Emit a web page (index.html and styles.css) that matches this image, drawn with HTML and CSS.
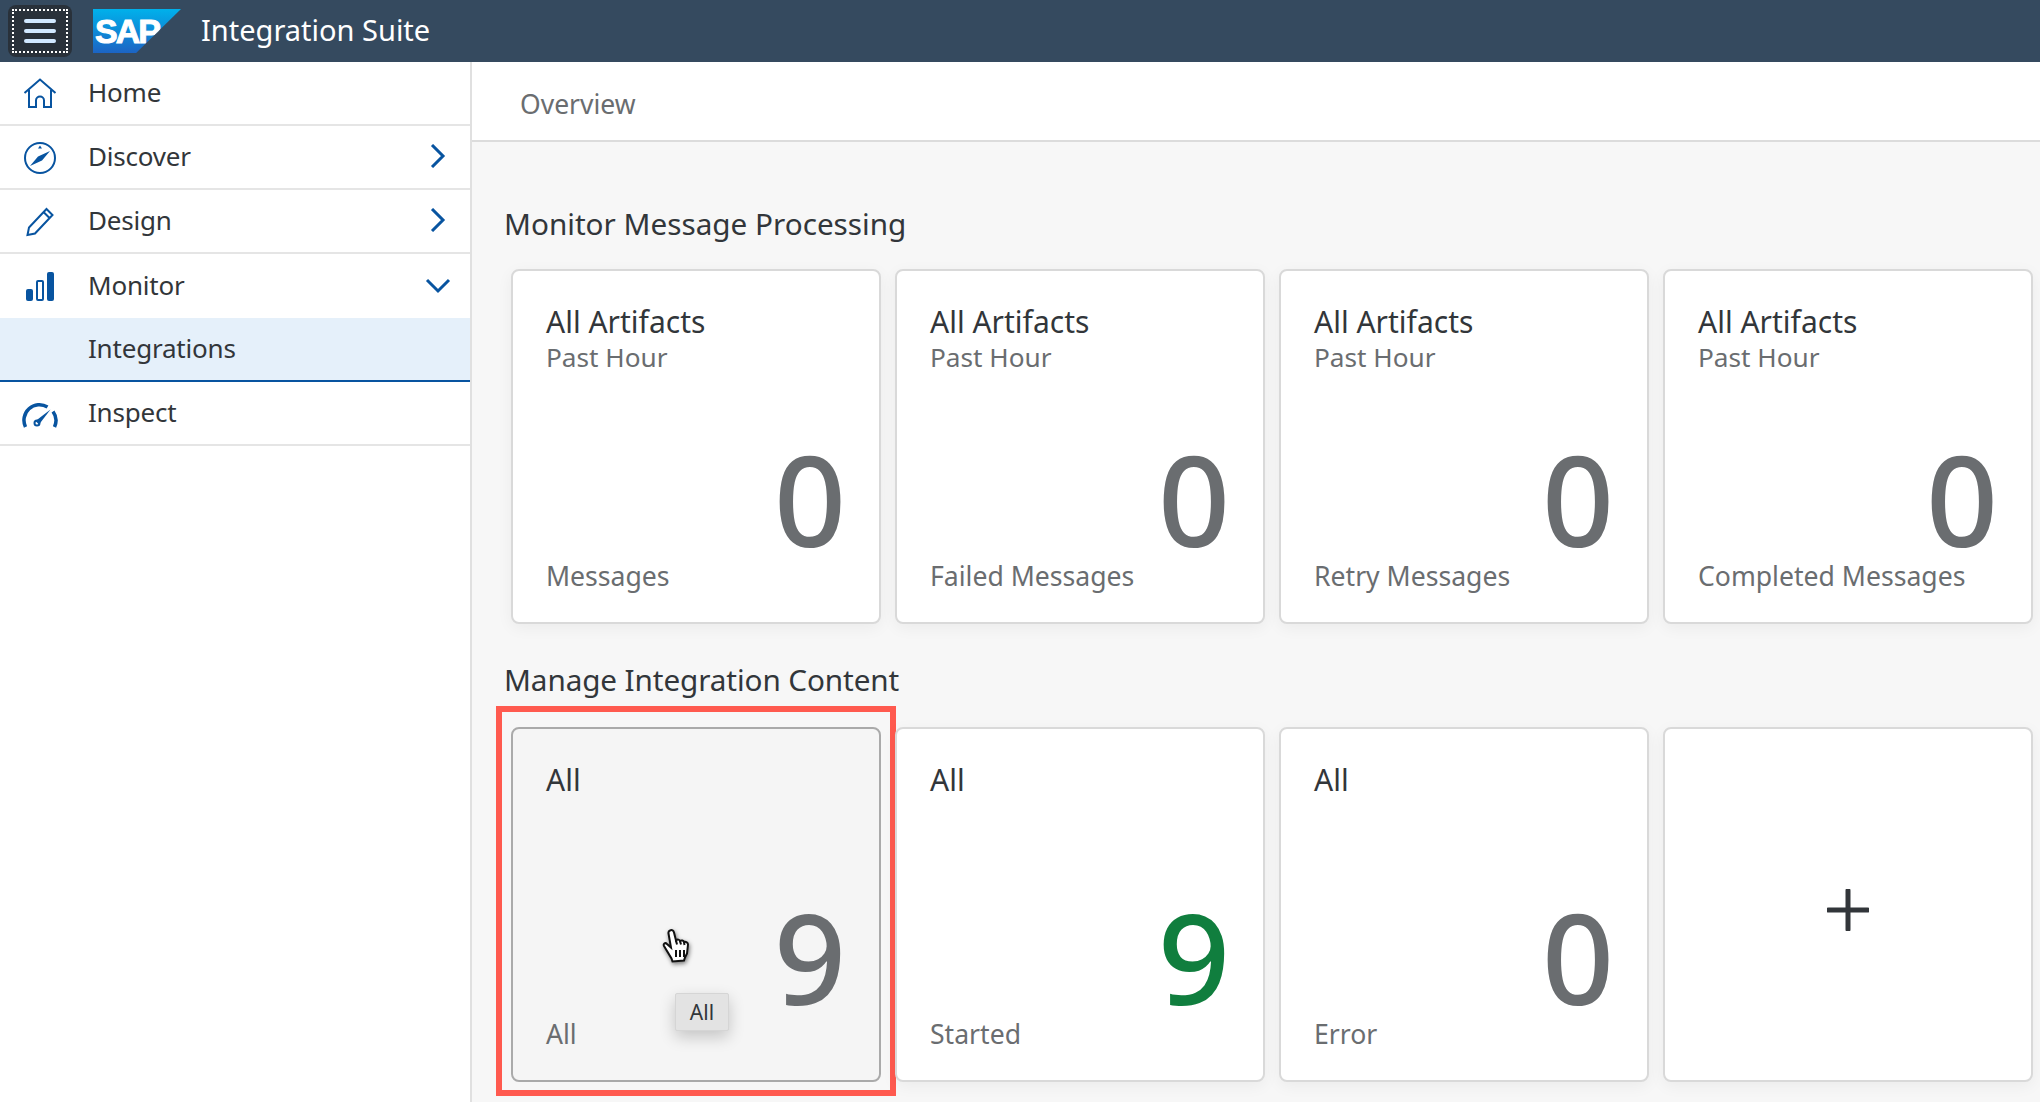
FILE: index.html
```html
<!DOCTYPE html>
<html lang="en">
<head>
  <meta charset="UTF-8">
  <title>Integration Suite</title>
  <link rel="stylesheet" href="styles.css">
</head>
<body>
  <header class="shell-bar">
    <button class="menu-btn">
      <span class="menu-focus">
        <span class="menu-line"></span>
        <span class="menu-line"></span>
        <span class="menu-line"></span>
      </span>
    </button>
    <div class="sap-logo"><span>SAP</span></div>
    <div class="shell-title">Integration Suite</div>
  </header>

  <div class="app">
    <nav class="side-nav">
      <div class="nav-item">
        <svg class="nav-icon" viewBox="0 0 36 36"><path d="M2.500 17 18 3.500 33.500 17M7 14v17h7v-6.500a4 4 0 0 1 8 0V31h7V14"/></svg>
        <span class="nav-text">Home</span>
      </div>
      <div class="nav-item">
        <svg class="nav-icon" viewBox="0 0 36 36"><circle cx="18" cy="18" r="15"/><path class="fill" d="M28 11 20 20.500 8 26l8-9.500zM18 5.500l2 3h-4z"/></svg>
        <span class="nav-text">Discover</span>
        <svg class="nav-chevron" viewBox="0 0 24 24"><path d="M7 1l11 11L7 23"/></svg>
      </div>
      <div class="nav-item">
        <svg class="nav-icon" viewBox="0 0 36 36"><path d="M5.500 31l1.500-7.500L24.500 5l6 6L13 29.500zM21.500 8l6 6"/></svg>
        <span class="nav-text">Design</span>
        <svg class="nav-chevron" viewBox="0 0 24 24"><path d="M7 1l11 11L7 23"/></svg>
      </div>
      <div class="nav-item nav-open">
        <svg class="nav-icon" viewBox="0 0 36 36"><rect class="fill" x="4" y="21" width="7" height="12" rx="2"/><rect x="15" y="13" width="6" height="19" rx="1"/><rect class="fill" x="25" y="4" width="7" height="29" rx="2"/></svg>
        <span class="nav-text">Monitor</span>
        <svg class="nav-chevron nav-chevron-down" viewBox="0 0 24 24"><path d="M1 7l11 11L23 7"/></svg>
      </div>
      <div class="nav-item nav-sub">
        <span class="nav-text">Integrations</span>
      </div>
      <div class="nav-item">
        <svg class="nav-icon" viewBox="0 0 36 36"><path class="thick" d="M3.500 31A15.500 15.500 0 0 1 25.500 11M32.500 31a15.500 15.500 0 0 0-1.500-15.500"/><circle class="thin" cx="15" cy="27" r="2.500"/><path class="fill" d="M13.500 25 28.500 13.500 17 28.500z"/></svg>
        <span class="nav-text">Inspect</span>
      </div>
    </nav>

    <main class="content">
      <div class="sub-header">Overview</div>

      <section class="tile-section tile-section-first">
        <h2 class="section-title">Monitor Message Processing</h2>
        <div class="tile-grid">
          <div class="tile">
            <div class="tile-title">All Artifacts</div>
            <div class="tile-sub">Past Hour</div>
            <div class="tile-foot"><span class="tile-label">Messages</span><span class="tile-num">0</span></div>
          </div>
          <div class="tile">
            <div class="tile-title">All Artifacts</div>
            <div class="tile-sub">Past Hour</div>
            <div class="tile-foot"><span class="tile-label">Failed Messages</span><span class="tile-num">0</span></div>
          </div>
          <div class="tile">
            <div class="tile-title">All Artifacts</div>
            <div class="tile-sub">Past Hour</div>
            <div class="tile-foot"><span class="tile-label">Retry Messages</span><span class="tile-num">0</span></div>
          </div>
          <div class="tile">
            <div class="tile-title">All Artifacts</div>
            <div class="tile-sub">Past Hour</div>
            <div class="tile-foot"><span class="tile-label">Completed Messages</span><span class="tile-num">0</span></div>
          </div>
        </div>
      </section>

      <section class="tile-section">
        <h2 class="section-title">Manage Integration Content</h2>
        <div class="tile-grid">
          <div class="tile tile-hover">
            <div class="tile-title">All</div>
            <div class="tile-foot"><span class="tile-label">All</span><span class="tile-num">9</span></div>
            <svg class="hand-cursor" viewBox="0 0 34 36">
              <path d="M8 2.500c2-1 3.500 0 4 2l2 8c1.500-1.500 3.500-1 4 .5 1.500-1 3.500-.5 4 1 2-.5 4 .5 4 2.500l-1 9-2 4-1 3-11.500 1-1-3L2 18c-1-2 1-4 3-2l4 3.500L6.500 5.500c-.3-1.500.3-2.500 1.500-3z"/>
              <path d="M14 12.500l1 4M18 13l1 3.500M22 14l.5 3M14 22v7M18 22v7M22 22v7"/>
            </svg>
            <div class="tile-tooltip">All</div>
          </div>
          <div class="tile">
            <div class="tile-title">All</div>
            <div class="tile-foot"><span class="tile-label">Started</span><span class="tile-num tile-num-good">9</span></div>
          </div>
          <div class="tile">
            <div class="tile-title">All</div>
            <div class="tile-foot"><span class="tile-label">Error</span><span class="tile-num">0</span></div>
          </div>
          <div class="tile tile-add">
            <svg class="add-icon" viewBox="0 0 42 42"><path d="M21 1.500v39M1.500 21h39"/></svg>
          </div>
        </div>
      </section>
    </main>
  </div>
</body>
</html>
```

FILE: styles.css
```css
* {
  box-sizing: border-box;
}
html, body {
  height: 100%;
}
body {
  margin: 0;
  display: flex;
  flex-direction: column;
  overflow: hidden;
  font-family: 'Noto Sans', sans-serif;
  color: #32363a;
  background: #fff;
}

/* top bar */
.shell-bar {
  height: 62px;
  flex: none;
  display: flex;
  align-items: center;
  padding-left: 8px;
  background: #354a5f;
}
.menu-btn {
  width: 64px;
  height: 52px;
  padding: 4px;
  border: none;
  border-radius: 8px;
  background: #29313a;
}
.menu-focus {
  height: 100%;
  display: flex;
  flex-direction: column;
  justify-content: center;
  align-items: center;
  gap: 6px;
  border: 2px dotted #fff;
}
.menu-line {
  width: 32px;
  height: 4px;
  border-radius: 2px;
  background: #d1e8ff;
}
.sap-logo {
  width: 88px;
  height: 44px;
  margin-left: 21px;
  padding-left: 2px;
  background: linear-gradient(to bottom, #00b1eb, #1c64c4);
  clip-path: polygon(0 0, 100% 0, 49% 100%, 0 100%);
}
.sap-logo span {
  display: block;
  font-family: 'Liberation Sans', sans-serif;
  font-size: 34px;
  font-weight: 700;
  letter-spacing: -2px;
  line-height: 44px;
  color: #fff;
  -webkit-text-stroke: 1px #fff;
}
.shell-title {
  margin-left: 20px;
  padding-bottom: 4px;
  font-size: 29px;
  color: #fff;
}

.app {
  flex: 1;
  display: flex;
  min-height: 0;
}

/* left nav */
.side-nav {
  width: 472px;
  flex: none;
  border-right: 2px solid #e0e0e0;
  background: #fff;
}
.nav-item {
  height: 64px;
  display: flex;
  align-items: center;
  padding: 0 21px 3px 88px;
  position: relative;
  border-bottom: 2px solid #e5e5e5;
}
.nav-text {
  flex: 1;
  font-size: 26px;
  letter-spacing: -0.2px;
}
.nav-icon {
  position: absolute;
  left: 22px;
  top: 14px;
  width: 36px;
  height: 36px;
  fill: none;
  stroke: #0854a0;
  stroke-width: 2;
}
.nav-icon .fill {
  fill: #0854a0;
  stroke: none;
}
.nav-icon .thick {
  stroke-width: 3.500;
}
.nav-chevron {
  width: 24px;
  height: 24px;
  fill: none;
  stroke: #0854a0;
  stroke-width: 3;
}
.nav-chevron-down {
  width: 26px;
  margin-right: -2px;
}
.nav-open {
  border-bottom: none;
}
.nav-sub {
  background: #e5f0fa;
  border-bottom: 2px solid #0854a0;
}

/* main area */
.content {
  flex: 1;
  min-width: 0;
  background: #f7f7f7;
}
.sub-header {
  height: 80px;
  display: flex;
  align-items: center;
  padding: 5px 0 0 48px;
  font-size: 26.500px;
  color: #6a6d70;
  background: #fff;
  border-bottom: 2px solid #dcdcdc;
}
.tile-section {
  padding-left: 32px;
}
.tile-section-first {
  padding-top: 62px;
}
.section-title {
  margin: 0 0 25px;
  font-size: 29.700px;
  font-weight: 400;
  line-height: 40px;
}
.tile-section + .tile-section {
  margin-top: 36px;
}
.tile-section + .tile-section .section-title {
  margin-bottom: 27px;
  letter-spacing: -0.1px;
}
.tile-grid {
  display: grid;
  grid-template-columns: repeat(4, 370px);
  gap: 14px;
  padding-left: 7px;
}
.tile {
  height: 355px;
  display: flex;
  flex-direction: column;
  padding: 31px 33px 29px 33px;
  position: relative;
  background: #fff;
  border: 2px solid #d9d9d9;
  border-radius: 8px;
  box-shadow: 0 4px 16px rgba(0, 0, 0, 0.05);
}
.tile-title {
  font-size: 30px;
  line-height: 40px;
}
.tile-sub {
  font-size: 26.200px;
  line-height: 30px;
  color: #6a6d70;
}
.tile-foot {
  margin-top: auto;
  display: flex;
  align-items: flex-end;
}
.tile-label {
  flex: 1;
  width: 0;
  font-size: 26.600px;
  line-height: 34px;
  white-space: nowrap;
  color: #6a6d70;
}
.tile-num {
  font-size: 126px;
  font-weight: 500;
  line-height: 122px;
  margin-bottom: 34px;
  color: #6a6d70;
}
.tile-num-good {
  color: #107e3e;
}
.tile-add {
  align-items: center;
  justify-content: center;
}
.add-icon {
  width: 42px;
  height: 42px;
  margin-top: 8px;
  fill: none;
  stroke: #32363a;
  stroke-width: 5;
  stroke-linecap: round;
}

/* hovered tile with the red annotation box */
.tile-hover {
  background: #f5f5f5;
  border-color: #aaa;
  box-shadow: none;
}
.tile-hover::after {
  content: "";
  position: absolute;
  left: -17px;
  top: -23px;
  right: -17px;
  bottom: -16px;
  border: 6px solid #ff5a4f;
}
.hand-cursor {
  position: absolute;
  left: 149px;
  top: 199px;
  width: 34px;
  height: 36px;
  fill: #fff;
  stroke: #111;
  stroke-width: 2;
  filter: drop-shadow(1px 2px 2px rgba(0, 0, 0, 0.5));
}
.tile-tooltip {
  position: absolute;
  left: 162px;
  top: 264px;
  width: 54px;
  height: 38px;
  text-align: center;
  font-size: 21px;
  line-height: 36px;
  background: #e3e3e3;
  border: 1px solid #d5d5d5;
  border-radius: 2px;
  box-shadow: 0 6px 16px rgba(0, 0, 0, 0.2);
}
```
